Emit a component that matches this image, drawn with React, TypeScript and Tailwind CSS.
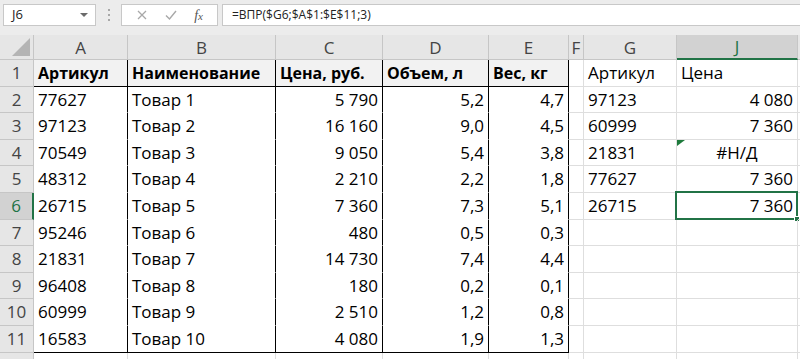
import React from "react";

const font = { fontFamily: '"Open Sans", "Noto Sans", sans-serif' };

const colWidths = [
  "w-[94px]",
  "w-[148px]",
  "w-[107px]",
  "w-[106px]",
  "w-[80px]",
  "w-[15px]",
  "w-[93px]",
  "w-[121px]",
  "w-[20px]",
];
const letters = ["A", "B", "C", "D", "E", "F", "G", "J", ""];

const table = [
  ["Артикул", "Наименование", "Цена, руб.", "Объем, л", "Вес, кг"],
  ["77627", "Товар 1", "5 790", "5,2", "4,7"],
  ["97123", "Товар 2", "16 160", "9,0", "4,5"],
  ["70549", "Товар 3", "9 050", "5,4", "3,8"],
  ["48312", "Товар 4", "2 210", "2,2", "1,8"],
  ["26715", "Товар 5", "7 360", "7,3", "5,1"],
  ["95246", "Товар 6", "480", "0,5", "0,3"],
  ["21831", "Товар 7", "14 730", "7,4", "4,4"],
  ["96408", "Товар 8", "180", "0,2", "0,1"],
  ["60999", "Товар 9", "2 510", "1,2", "0,8"],
  ["16583", "Товар 10", "4 080", "1,9", "1,3"],
];

const lookup = [
  ["Артикул", "Цена"],
  ["97123", "4 080"],
  ["60999", "7 360"],
  ["21831", "#Н/Д"],
  ["77627", "7 360"],
  ["26715", "7 360"],
];

function Toolbar() {
  return (
    <div className="h-[35px] bg-[#ececec] flex items-start pt-[4px] pl-[3px] text-[13px] text-[#222]">
      <div className="w-[93px] h-[22px] bg-white border border-[#c8c8c8] flex items-center justify-between pl-[8px] pr-[7px]">
        <span>J6</span>
        <svg width="8" height="5" viewBox="0 0 8 5">
          <path d="M0 0 L8 0 L4 4 Z" fill="#6b6b6b" />
        </svg>
      </div>
      <div className="w-[25px] h-[22px] flex flex-col items-center justify-center gap-[3px]">
        <span className="w-[2px] h-[2px] bg-[#a8a8a8]" />
        <span className="w-[2px] h-[2px] bg-[#a8a8a8]" />
        <span className="w-[2px] h-[2px] bg-[#a8a8a8]" />
      </div>
      <div className="w-[97px] h-[22px] bg-white border border-[#c8c8c8] flex items-center justify-around px-[6px]">
        <svg width="12" height="12" viewBox="0 0 12 12">
          <path d="M2 2 L10 10 M10 2 L2 10" stroke="#a8a8a8" strokeWidth="1.3" />
        </svg>
        <svg width="14" height="12" viewBox="0 0 14 12">
          <path d="M2 6.5 L5.5 10 L12 2" stroke="#a8a8a8" strokeWidth="1.4" fill="none" />
        </svg>
        <span
          className="italic text-[14px] text-[#555]"
          style={{ fontFamily: '"Liberation Serif", serif' }}
        >
          f<span className="text-[11px]">x</span>
        </span>
      </div>
      <div className="ml-[4px] flex-1 h-[22px] bg-white border border-[#c8c8c8] border-r-0 flex items-center pl-[9px] text-[12px]">
        =ВПР($G6;$A$1:$E$11;3)
      </div>
    </div>
  );
}

function HeaderRow() {
  return (
    <div className="flex h-[25px] bg-[#e6e6e6] text-[17px] text-[#444]">
      <div className="w-[34px] shrink-0 border-r border-b border-[#c6c6c6] flex items-end justify-end p-[3px]">
        <svg width="18" height="18" viewBox="0 0 18 18">
          <path d="M18 0 L18 18 L0 18 Z" fill="#b4b4b4" />
        </svg>
      </div>
      {letters.map((l, i) => {
        const sel = l === "J";
        return (
          <div
            key={i}
            className={`${colWidths[i]} shrink-0 border-r border-[#c6c6c6] flex items-center justify-center leading-none ${
              sel
                ? "bg-[#d2d2d2] text-[#217346] border-b-2 border-b-[#217346]"
                : "border-b"
            }`}
          >
            {l}
          </div>
        );
      })}
    </div>
  );
}

function cellClass(r: number, c: number) {
  const base = `${colWidths[c]} shrink-0 h-full border-r border-b px-[4px] flex items-center whitespace-nowrap relative`;
  if (r < 11 && c < 5) {
    let cls = base + " border-r-black";
    if (r === 0) cls += " border-b-black bg-[#f2f2f2] font-bold text-[16px]";
    else if (r === 10) cls += " border-b-black";
    else cls += " border-b-white";
    if (r > 0 && c >= 2) cls += " justify-end";
    return cls;
  }
  if (c === 7 && r > 0 && r < 6) {
    return base + " border-[#dedede] " + (r === 3 ? "justify-center" : "justify-end");
  }
  return base + " border-[#dedede]";
}

function cellText(r: number, c: number) {
  if (r < 11 && c < 5) return table[r][c];
  if (r < 6 && c === 6) return lookup[r][0];
  if (r < 6 && c === 7) return lookup[r][1];
  return "";
}

function DataRow({ r }: { r: number }) {
  const selRow = r === 5;
  return (
    <div className="flex h-[26.6px] text-[17px] text-black">
      <div
        className={`w-[34px] shrink-0 border-b border-[#c6c6c6] flex items-center justify-center ${
          selRow
            ? "bg-[#d2d2d2] text-[#217346] border-r-2 border-r-[#217346]"
            : "bg-[#e6e6e6] text-[#444] border-r"
        }`}
      >
        {r < 11 ? r + 1 : ""}
      </div>
      {colWidths.map((_, c) => (
        <div key={c} className={cellClass(r, c)}>
          {cellText(r, c)}
          {r === 3 && c === 7 && (
            <svg className="absolute left-0 top-0" width="8" height="6" viewBox="0 0 8 6">
              <path d="M0 0 L8 0 L0 6 Z" fill="#1e7a3c" />
            </svg>
          )}
          {r === 5 && c === 7 && (
            <div className="absolute -left-[2px] -top-[2px] right-[-1px] bottom-[-1px] border-2 border-[#217346]">
              <div className="absolute -right-[4px] -bottom-[4px] w-[6px] h-[6px] bg-[#217346] border border-white" />
            </div>
          )}
        </div>
      ))}
    </div>
  );
}

export default function App() {
  return (
    <div className="w-[800px] h-[359px] overflow-hidden bg-white" style={font}>
      <Toolbar />
      <HeaderRow />
      {Array.from({ length: 12 }).map((_, r) => (
        <DataRow key={r} r={r} />
      ))}
    </div>
  );
}
